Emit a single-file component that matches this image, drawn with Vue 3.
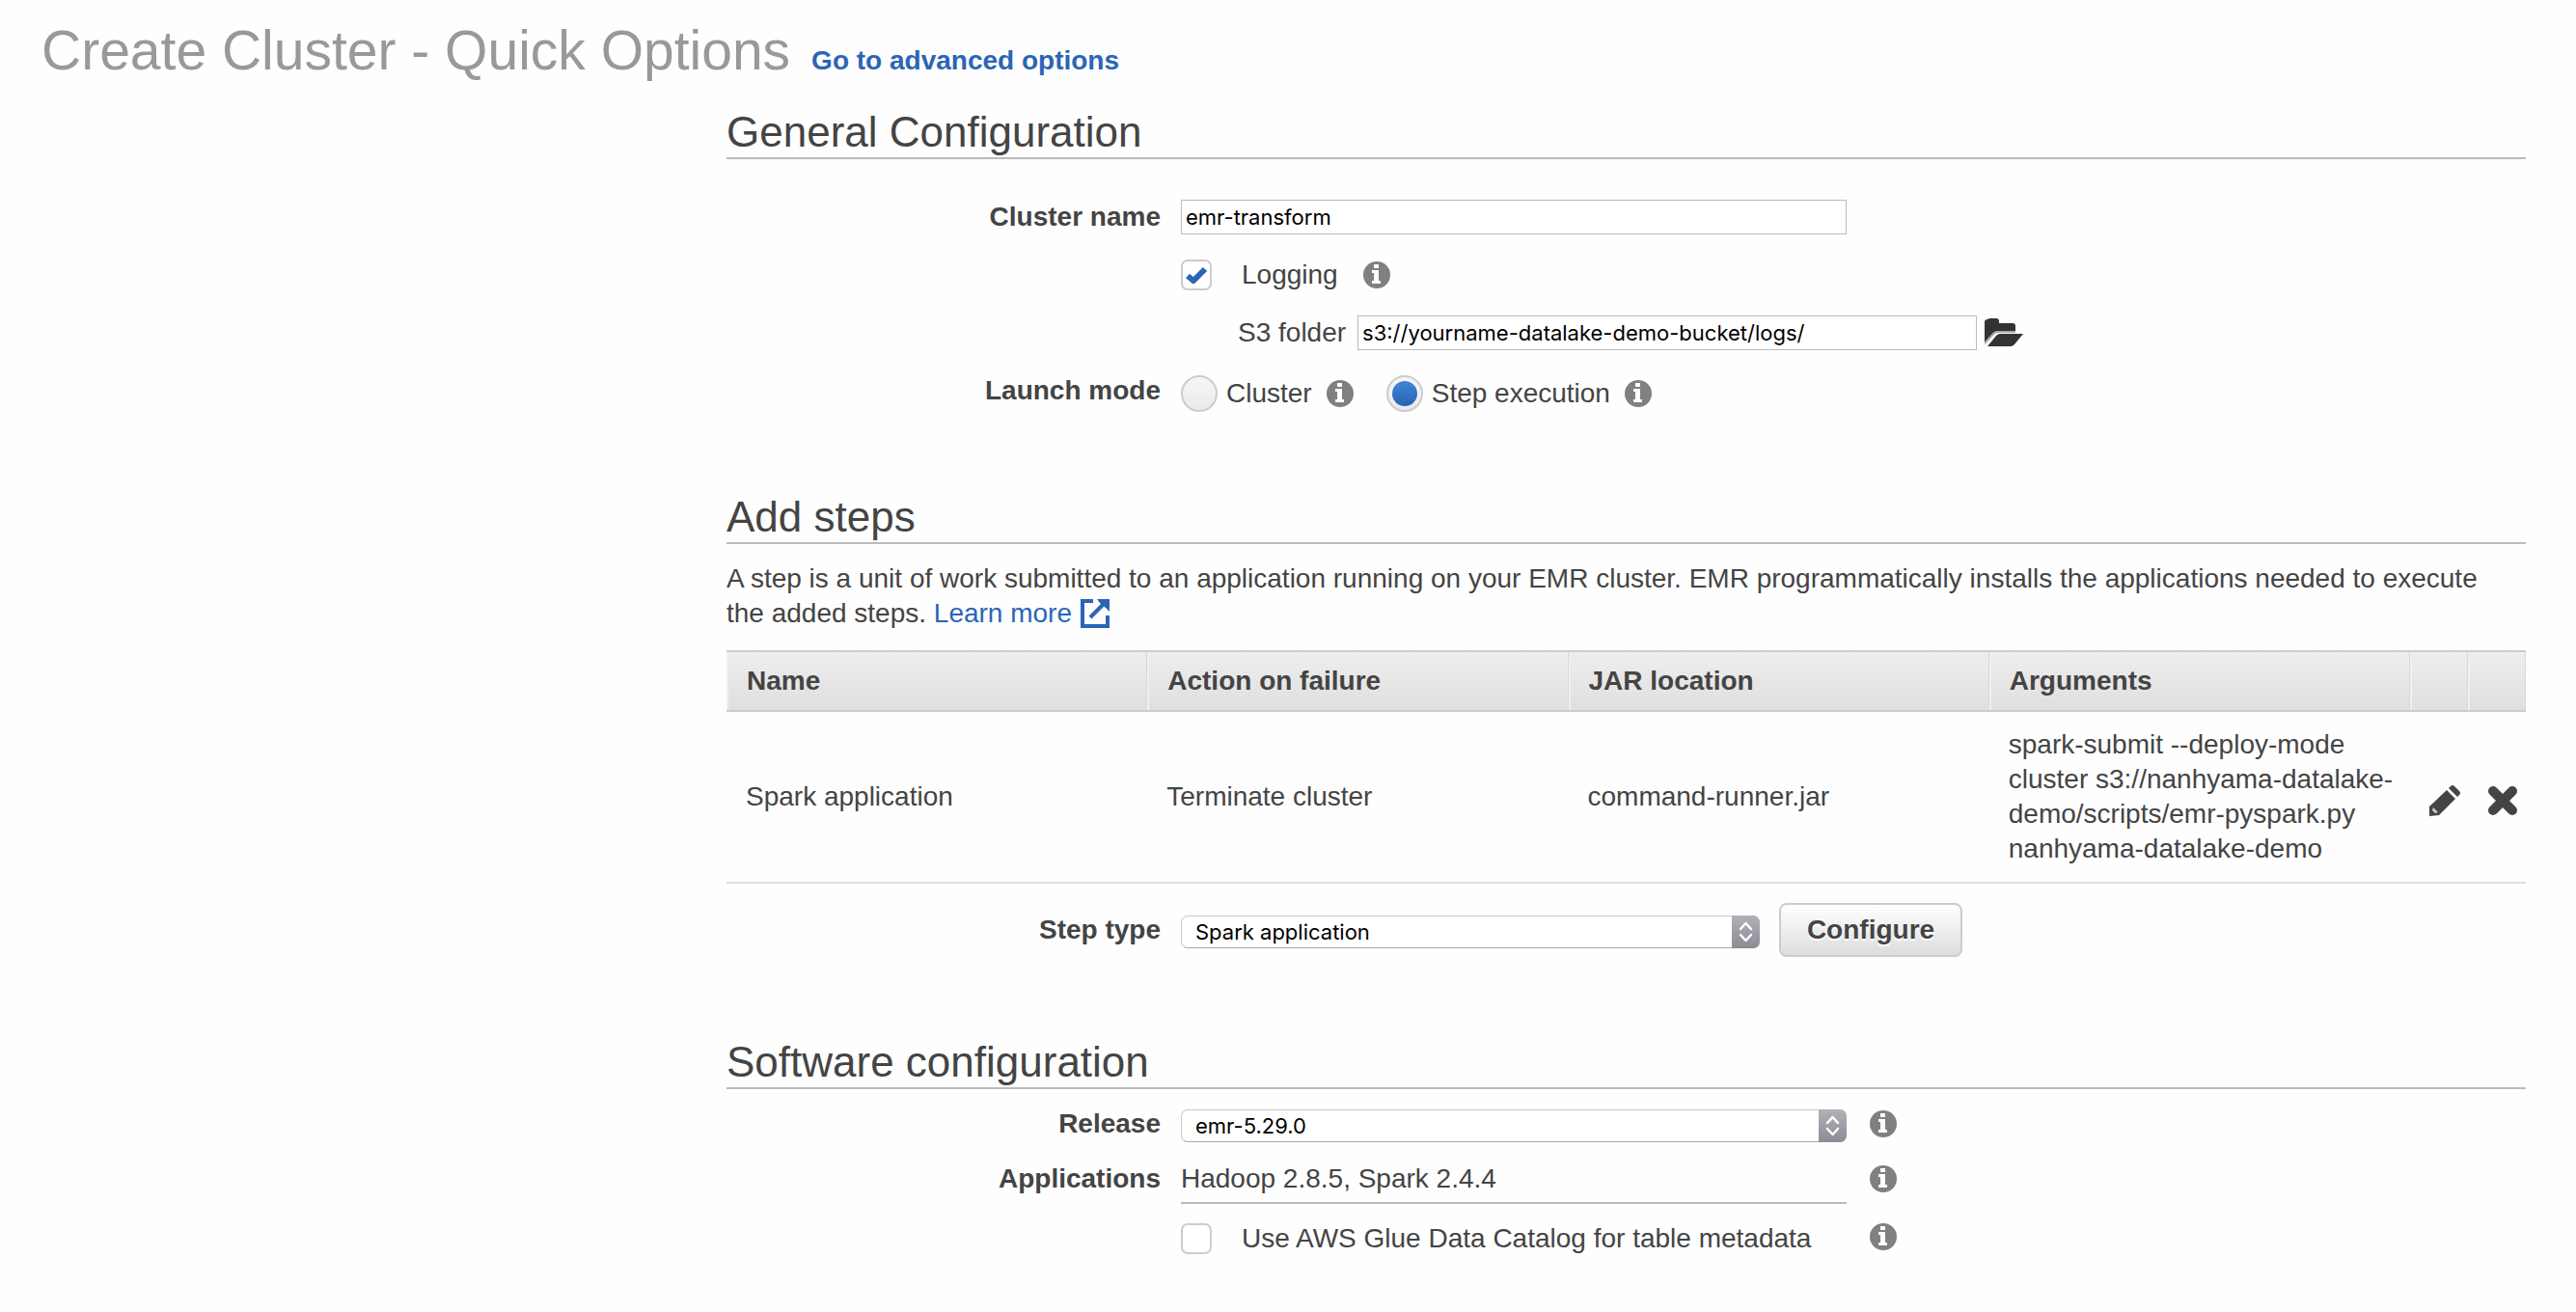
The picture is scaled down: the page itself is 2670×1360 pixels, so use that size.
<script setup>
import { ref, h } from 'vue'

const clusterName = ref('emr-transform')
const logging = ref(true)
const s3Folder = ref('s3://yourname-datalake-demo-bucket/logs/')
const launchMode = ref('step')
const stepType = ref('Spark application')
const release = ref('emr-5.29.0')
const glueCatalog = ref(false)

const steps = [
  {
    name: 'Spark application',
    action: 'Terminate cluster',
    jar: 'command-runner.jar',
    args: 'spark-submit --deploy-mode cluster s3://nanhyama-datalake-demo/scripts/emr-pyspark.py nanhyama-datalake-demo',
  },
]

const InfoIcon = () =>
  h('svg', { width: 28, height: 28, viewBox: '0 0 28 28', 'aria-hidden': 'true' }, [
    h('circle', { cx: 14, cy: 14, r: 14, fill: '#808080' }),
    h('path', { d: 'M11 3h5v4h-5zM9 9h7v11h2v3H9v-3h2v-8H9z', fill: '#fff' }),
  ])

const Arrows = () =>
  h('svg', { width: 29, height: 34, viewBox: '0 0 29 34', 'aria-hidden': 'true' }, [
    h('path', {
      d: 'M9 14l5.500-6 5.500 6M9 20l5.500 6 5.500-6',
      fill: 'none',
      stroke: '#fff',
      'stroke-width': 2.5,
      'stroke-linecap': 'round',
      'stroke-linejoin': 'round',
    }),
  ])
</script>

<template>
  <div class="page">
    <header class="title-bar">
      <h1>Create Cluster - Quick Options</h1>
      <a href="#advanced">Go to advanced options</a>
    </header>

    <main>
      <section>
        <h2>General Configuration</h2>
        <div class="rows general">
          <div class="row">
            <label class="name" for="cluster-name">Cluster name</label>
            <div class="field">
              <input id="cluster-name" v-model="clusterName" class="text wide" type="text" />
            </div>
          </div>
          <div class="row">
            <span></span>
            <div class="field">
              <span class="check">
                <input id="logging" v-model="logging" type="checkbox" />
                <svg v-if="logging" width="32" height="32" viewBox="0 0 32 32" aria-hidden="true">
                  <path d="M7 17l6 5L25 10" fill="none" stroke="#2b65b5" stroke-width="6" stroke-linejoin="round" />
                </svg>
              </span>
              <label class="check-label" for="logging">Logging</label>
              <InfoIcon class="info after-logging" />
            </div>
          </div>
          <div class="row">
            <span></span>
            <div class="field folder">
              <label for="s3-folder">S3 folder</label>
              <input id="s3-folder" v-model="s3Folder" class="text bucket" type="text" />
              <button class="icon-button" type="button" aria-label="Browse">
                <svg width="40" height="30" viewBox="0 0 40 30" aria-hidden="true">
                  <path d="M0 25V4q0-3 3-3l2-1h7q3 0 3 3v2h14q3 0 3 3v5H14q-3 0-5 3z" fill="#333" />
                  <path d="M0 26L9 16q2-2 5-2h18" fill="none" stroke="#aaa" stroke-width="2" />
                  <path d="M3 29L12 18q2-2 4-2h24L31 27q-2 2-4 2z" fill="#333" />
                </svg>
              </button>
            </div>
          </div>
          <div class="row">
            <span id="launch-mode" class="name">Launch mode</span>
            <div class="field modes" role="radiogroup" aria-labelledby="launch-mode">
              <span class="mode">
                <input id="mode-cluster" v-model="launchMode" type="radio" name="mode" value="cluster" />
                <label class="radio-label" for="mode-cluster">Cluster</label>
                <InfoIcon class="info after-radio" />
              </span>
              <span class="mode">
                <input id="mode-step" v-model="launchMode" type="radio" name="mode" value="step" />
                <label class="radio-label" for="mode-step">Step execution</label>
                <InfoIcon class="info after-radio" />
              </span>
            </div>
          </div>
        </div>
      </section>

      <section>
        <h2>Add steps</h2>
        <p>
          A step is a unit of work submitted to an application running on your EMR cluster. EMR programmatically
          installs the applications needed to execute the added steps.
          <a class="learn" href="#learn">Learn more
            <svg width="30" height="30" viewBox="0 0 30 30" aria-hidden="true">
              <path d="M13 2H2v26h26V17" fill="none" stroke="#2b65b5" stroke-width="4" />
              <path d="M10 19L24 5" fill="none" stroke="#2b65b5" stroke-width="4" />
              <path d="M17 0h13v13l-4-4-6-5z" fill="#2b65b5" />
            </svg></a>
        </p>
        <table>
          <colgroup>
            <col /><col /><col /><col />
            <col class="tool" /><col class="tool" />
          </colgroup>
          <thead>
            <tr>
              <th>Name</th>
              <th>Action on failure</th>
              <th>JAR location</th>
              <th>Arguments</th>
              <th></th>
              <th></th>
            </tr>
          </thead>
          <tbody>
            <tr v-for="step in steps" :key="step.name">
              <td>{{ step.name }}</td>
              <td>{{ step.action }}</td>
              <td>{{ step.jar }}</td>
              <td>{{ step.args }}</td>
              <td class="tool">
                <button class="icon-button" type="button" aria-label="Edit step">
                  <svg width="32" height="32" viewBox="0 0 32 32" aria-hidden="true">
                    <path d="M0 32V22L18 5l9 9L10 31z" fill="#444" />
                    <path d="M20 3l2-2q2-2 4 0l5 5q2 2 0 4l-2 2z" fill="#444" />
                    <path d="M4 23l5 5-3 1-3-3z" fill="#ccc" />
                  </svg>
                </button>
              </td>
              <td class="tool">
                <button class="icon-button" type="button" aria-label="Remove step">
                  <svg width="32" height="32" viewBox="0 0 32 32" aria-hidden="true">
                    <path d="M6 6l20 20M26 6L6 26" stroke="#444" stroke-width="10" stroke-linecap="round" />
                  </svg>
                </button>
              </td>
            </tr>
          </tbody>
        </table>
        <div class="row step-type">
          <label class="name" for="step-type">Step type</label>
          <div class="field">
            <span class="select narrow">
              <select id="step-type" v-model="stepType">
                <option>Spark application</option>
              </select>
              <Arrows class="arrows" />
            </span>
            <button class="configure" type="button">Configure</button>
          </div>
        </div>
      </section>

      <section>
        <h2>Software configuration</h2>
        <div class="rows software">
          <div class="row">
            <label class="name" for="release">Release</label>
            <div class="field">
              <span class="select wide">
                <select id="release" v-model="release">
                  <option>emr-5.29.0</option>
                </select>
                <Arrows class="arrows" />
              </span>
              <InfoIcon class="info" />
            </div>
          </div>
          <div class="row">
            <span class="name">Applications</span>
            <div class="field">
              <span class="applications wide">Hadoop 2.8.5, Spark 2.4.4</span>
              <InfoIcon class="info" />
            </div>
          </div>
          <div class="row">
            <span></span>
            <div class="field catalog">
              <div class="wide glue">
                <span class="check">
                  <input id="glue" v-model="glueCatalog" type="checkbox" />
                </span>
                <label class="check-label" for="glue">Use AWS Glue Data Catalog for table metadata</label>
              </div>
              <InfoIcon />
            </div>
          </div>
        </div>
      </section>
    </main>
  </div>
</template>

<style>
body {
  background: #fefefe;
}
</style>

<style scoped>
.page {
  padding: 20px 52px 54px 43px;
  color: #444;
  font: 28px/36px "Liberation Sans", Arial, sans-serif;
}
.page *,
.page *::before {
  box-sizing: border-box;
}
svg {
  display: block;
  flex: none;
}
a {
  color: #2b65b5;
  text-decoration: none;
}
.title-bar {
  display: flex;
  align-items: baseline;
  gap: 22px;
}
.title-bar a {
  font-weight: 700;
}
h1 {
  margin: 0;
  color: #999;
  font-size: 57px;
  font-weight: 400;
  line-height: 64px;
}
main {
  display: flex;
  flex-direction: column;
  gap: 83px;
  margin: 27px 0 0 710px;
}
h2 {
  margin: 0;
  border-bottom: 2px solid #bbb;
  font-size: 44px;
  font-weight: 400;
  line-height: 52px;
}
.rows {
  display: flex;
  flex-direction: column;
}
.general {
  gap: 24px;
  padding-top: 42px;
}
.general .row {
  min-height: 36px;
}
.software {
  gap: 20px;
  padding-top: 18px;
}
.row {
  display: grid;
  grid-template-columns: 450px 1fr;
  column-gap: 21px;
}
.name {
  font-weight: 700;
  text-align: right;
}
.field {
  display: flex;
  align-items: center;
}
.text {
  height: 36px;
  margin: 0;
  padding: 0 4px;
  border: 1px solid #bbb;
  border-radius: 0;
  background: #fff;
  color: #000;
  font: 22px/34px Inter, sans-serif;
}
.wide {
  flex: none;
  width: 690px;
}
.check {
  display: grid;
  width: 32px;
  height: 32px;
}
.check > * {
  grid-area: 1 / 1;
}
.check svg {
  pointer-events: none;
}
input[type='checkbox'] {
  width: 32px;
  height: 32px;
  margin: 0;
  border: 2px solid #ccc;
  border-radius: 7px;
  background: #fff;
  appearance: none;
}
.check-label {
  margin-left: 31px;
}
.after-logging {
  margin-left: 26px;
}
.folder {
  padding-left: 59px;
}
.bucket {
  width: 642px;
  margin: 0 8px 0 12px;
}
.icon-button {
  display: block;
  padding: 0;
  border: 0;
  background: none;
}
.modes {
  gap: 34px;
  padding-top: 2px;
}
.mode {
  display: flex;
  align-items: center;
}
input[type='radio'] {
  width: 38px;
  height: 38px;
  margin: 0;
  border: 2px solid #ccc;
  border-radius: 50%;
  background: linear-gradient(#f6f6f6, #eaeaea);
  appearance: none;
}
input[type='radio']:checked::before {
  content: '';
  display: block;
  width: 26px;
  height: 26px;
  margin: 4px;
  border-radius: 50%;
  background: linear-gradient(#4285d8, #2a62b2);
}
.radio-label {
  margin-left: 9px;
}
.after-radio {
  margin-left: 15px;
}
p {
  margin: 18px 0 20px;
  padding-right: 24px;
}
.learn {
  display: inline-flex;
  gap: 9px;
  align-items: center;
  height: 36px;
  vertical-align: top;
}
table {
  width: 100%;
  border-spacing: 0;
  table-layout: fixed;
}
col.tool {
  width: 60px;
}
th {
  height: 64px;
  padding: 0 21px;
  border: solid #ccc;
  border-width: 2px 0;
  background: linear-gradient(#eee, #dfdfdf);
  box-shadow: inset 2px 0 #f0f0f0, inset -1px 0 #d8d8d8;
  text-align: left;
}
td {
  padding: 16px 4px 16px 20px;
  border-bottom: 2px solid #ddd;
}
td.tool {
  padding: 8px 0 0 20px;
}
.step-type {
  align-items: center;
  padding-top: 20px;
}
.select {
  display: grid;
  height: 34px;
  margin-top: 3px;
}
.narrow {
  width: 600px;
}
.select > * {
  grid-area: 1 / 1;
}
select {
  width: 100%;
  height: 34px;
  margin: 0;
  padding: 0 40px 0 14px;
  border: 1px solid #ccc;
  border-bottom-color: #aaa;
  border-radius: 7px;
  background: #fff;
  color: #000;
  font: 22px/32px Inter, sans-serif;
  appearance: none;
}
.arrows {
  justify-self: end;
  border-radius: 0 7px 7px 0;
  background: linear-gradient(#b2b1b8, #8d8b94);
  pointer-events: none;
}
.configure {
  width: 190px;
  height: 56px;
  margin-left: 20px;
  padding: 0;
  border: 2px solid #ccc;
  border-radius: 8px;
  background: linear-gradient(#fff, #ddd);
  color: #444;
  font: 700 28px/36px "Liberation Sans", Arial, sans-serif;
  text-shadow: 0 2px #fff;
}
.software .field {
  gap: 24px;
  align-items: flex-start;
}
.software .info {
  margin-top: 4px;
}
.applications {
  height: 44px;
  border-bottom: 2px solid #bbb;
}
.glue {
  display: flex;
  align-items: center;
}
.glue .check-label {
  line-height: 32px;
}
</style>
